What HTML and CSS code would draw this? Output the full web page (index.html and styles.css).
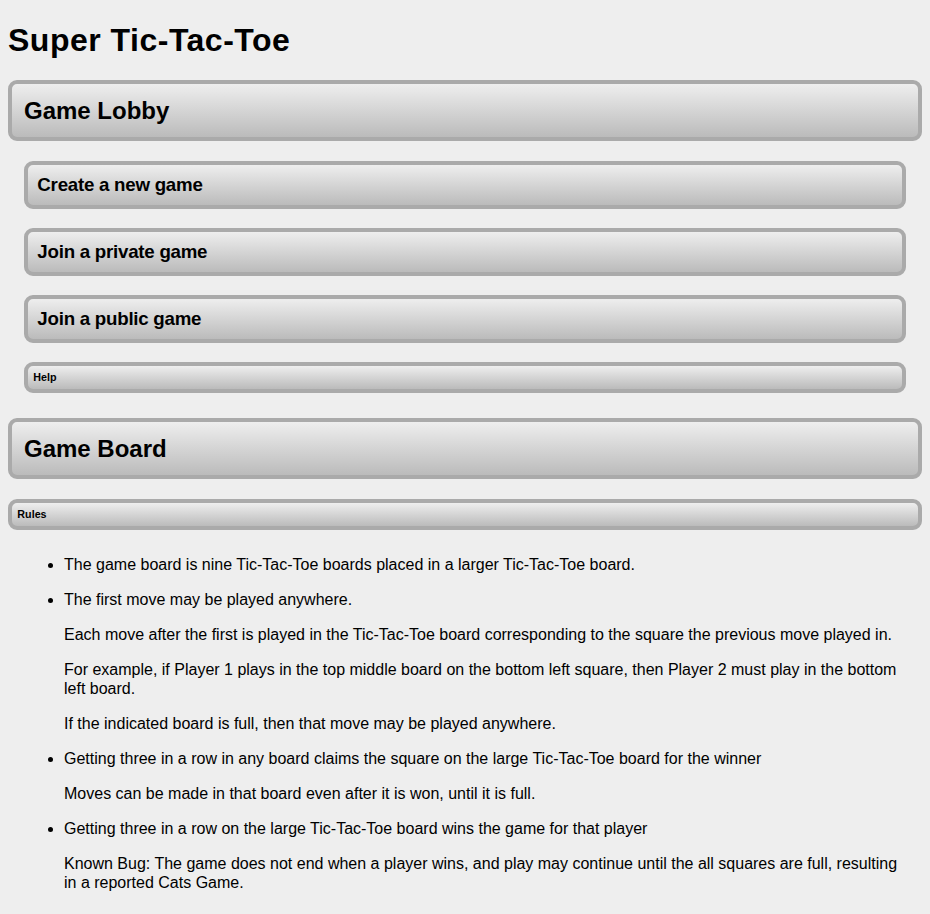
FILE: index.html
```html
<!DOCTYPE html>
<html lang="en">
<head>
<meta charset="utf-8">
<title>Super Tic-Tac-Toe</title>
<link rel="stylesheet" href="styles.css">
</head>
<body>
<h1 class="title">Super Tic-Tac-Toe</h1>
<h2 class="panel panel-lg">Game Lobby</h2>
<div class="lobby">
  <h3 class="panel panel-md">Create a new game</h3>
  <h3 class="panel panel-md">Join a private game</h3>
  <h3 class="panel panel-md">Join a public game</h3>
  <h6 class="panel panel-sm">Help</h6>
</div>
<h2 class="panel panel-lg">Game Board</h2>
<h6 class="panel panel-sm rules-head">Rules</h6>
<div class="rules">
  <ul class="rule-list">
    <li><p>The game board is nine Tic-Tac-Toe boards placed in a larger Tic-Tac-Toe board.</p></li>
    <li>
      <p>The first move may be played anywhere.</p>
      <p>Each move after the first is played in the Tic-Tac-Toe board corresponding to the square the previous move played in.</p>
      <p>For example, if Player 1 plays in the top middle board on the bottom left square, then Player 2 must play in the bottom left board.</p>
      <p>If the indicated board is full, then that move may be played anywhere.</p>
    </li>
    <li>
      <p>Getting three in a row in any board claims the square on the large Tic-Tac-Toe board for the winner</p>
      <p>Moves can be made in that board even after it is won, until it is full.</p>
    </li>
    <li>
      <p>Getting three in a row on the large Tic-Tac-Toe board wins the game for that player</p>
      <p>Known Bug: The game does not end when a player wins, and play may continue until the all squares are full, resulting in a reported Cats Game.</p>
    </li>
  </ul>
</div>
</body>
</html>
```

FILE: styles.css
```css
html {
  background: #eeeeee;
}

body {
  margin: 8px;
  background: #eeeeee;
  color: #000;
  font-family: "Liberation Sans", Arial, sans-serif;
}

.title {
  margin: 14px 0 21px;
  font-size: 32px;
  line-height: 37px;
  font-weight: bold;
  letter-spacing: 0.5px;
}

.panel {
  margin: 0;
  font-weight: bold;
  border: 4px solid #aaaaaa;
  border-radius: 9px;
  background: linear-gradient(to bottom, #eeeeee, #bbbbbb);
}

.panel-lg {
  font-size: 24px;
  line-height: 29px;
  padding: 12px 12px;
}

.panel-md {
  font-size: 18.72px;
  line-height: 22px;
  padding: 9px 9.36px;
  letter-spacing: -0.25px;
}

.panel-sm {
  font-size: 10.72px;
  line-height: 13px;
  padding: 5px 5.36px;
}

.lobby {
  display: flex;
  flex-direction: column;
  gap: 19px;
  margin: 20px 16px 25px;
}

.rules-head {
  margin-top: 20px;
}

.rules {
  margin: 25px 16px 0;
}

.rule-list {
  margin: 0;
  padding-left: 40px;
  font-size: 16px;
  line-height: 19px;
}

.rule-list p {
  margin: 0 0 16px;
}
```
